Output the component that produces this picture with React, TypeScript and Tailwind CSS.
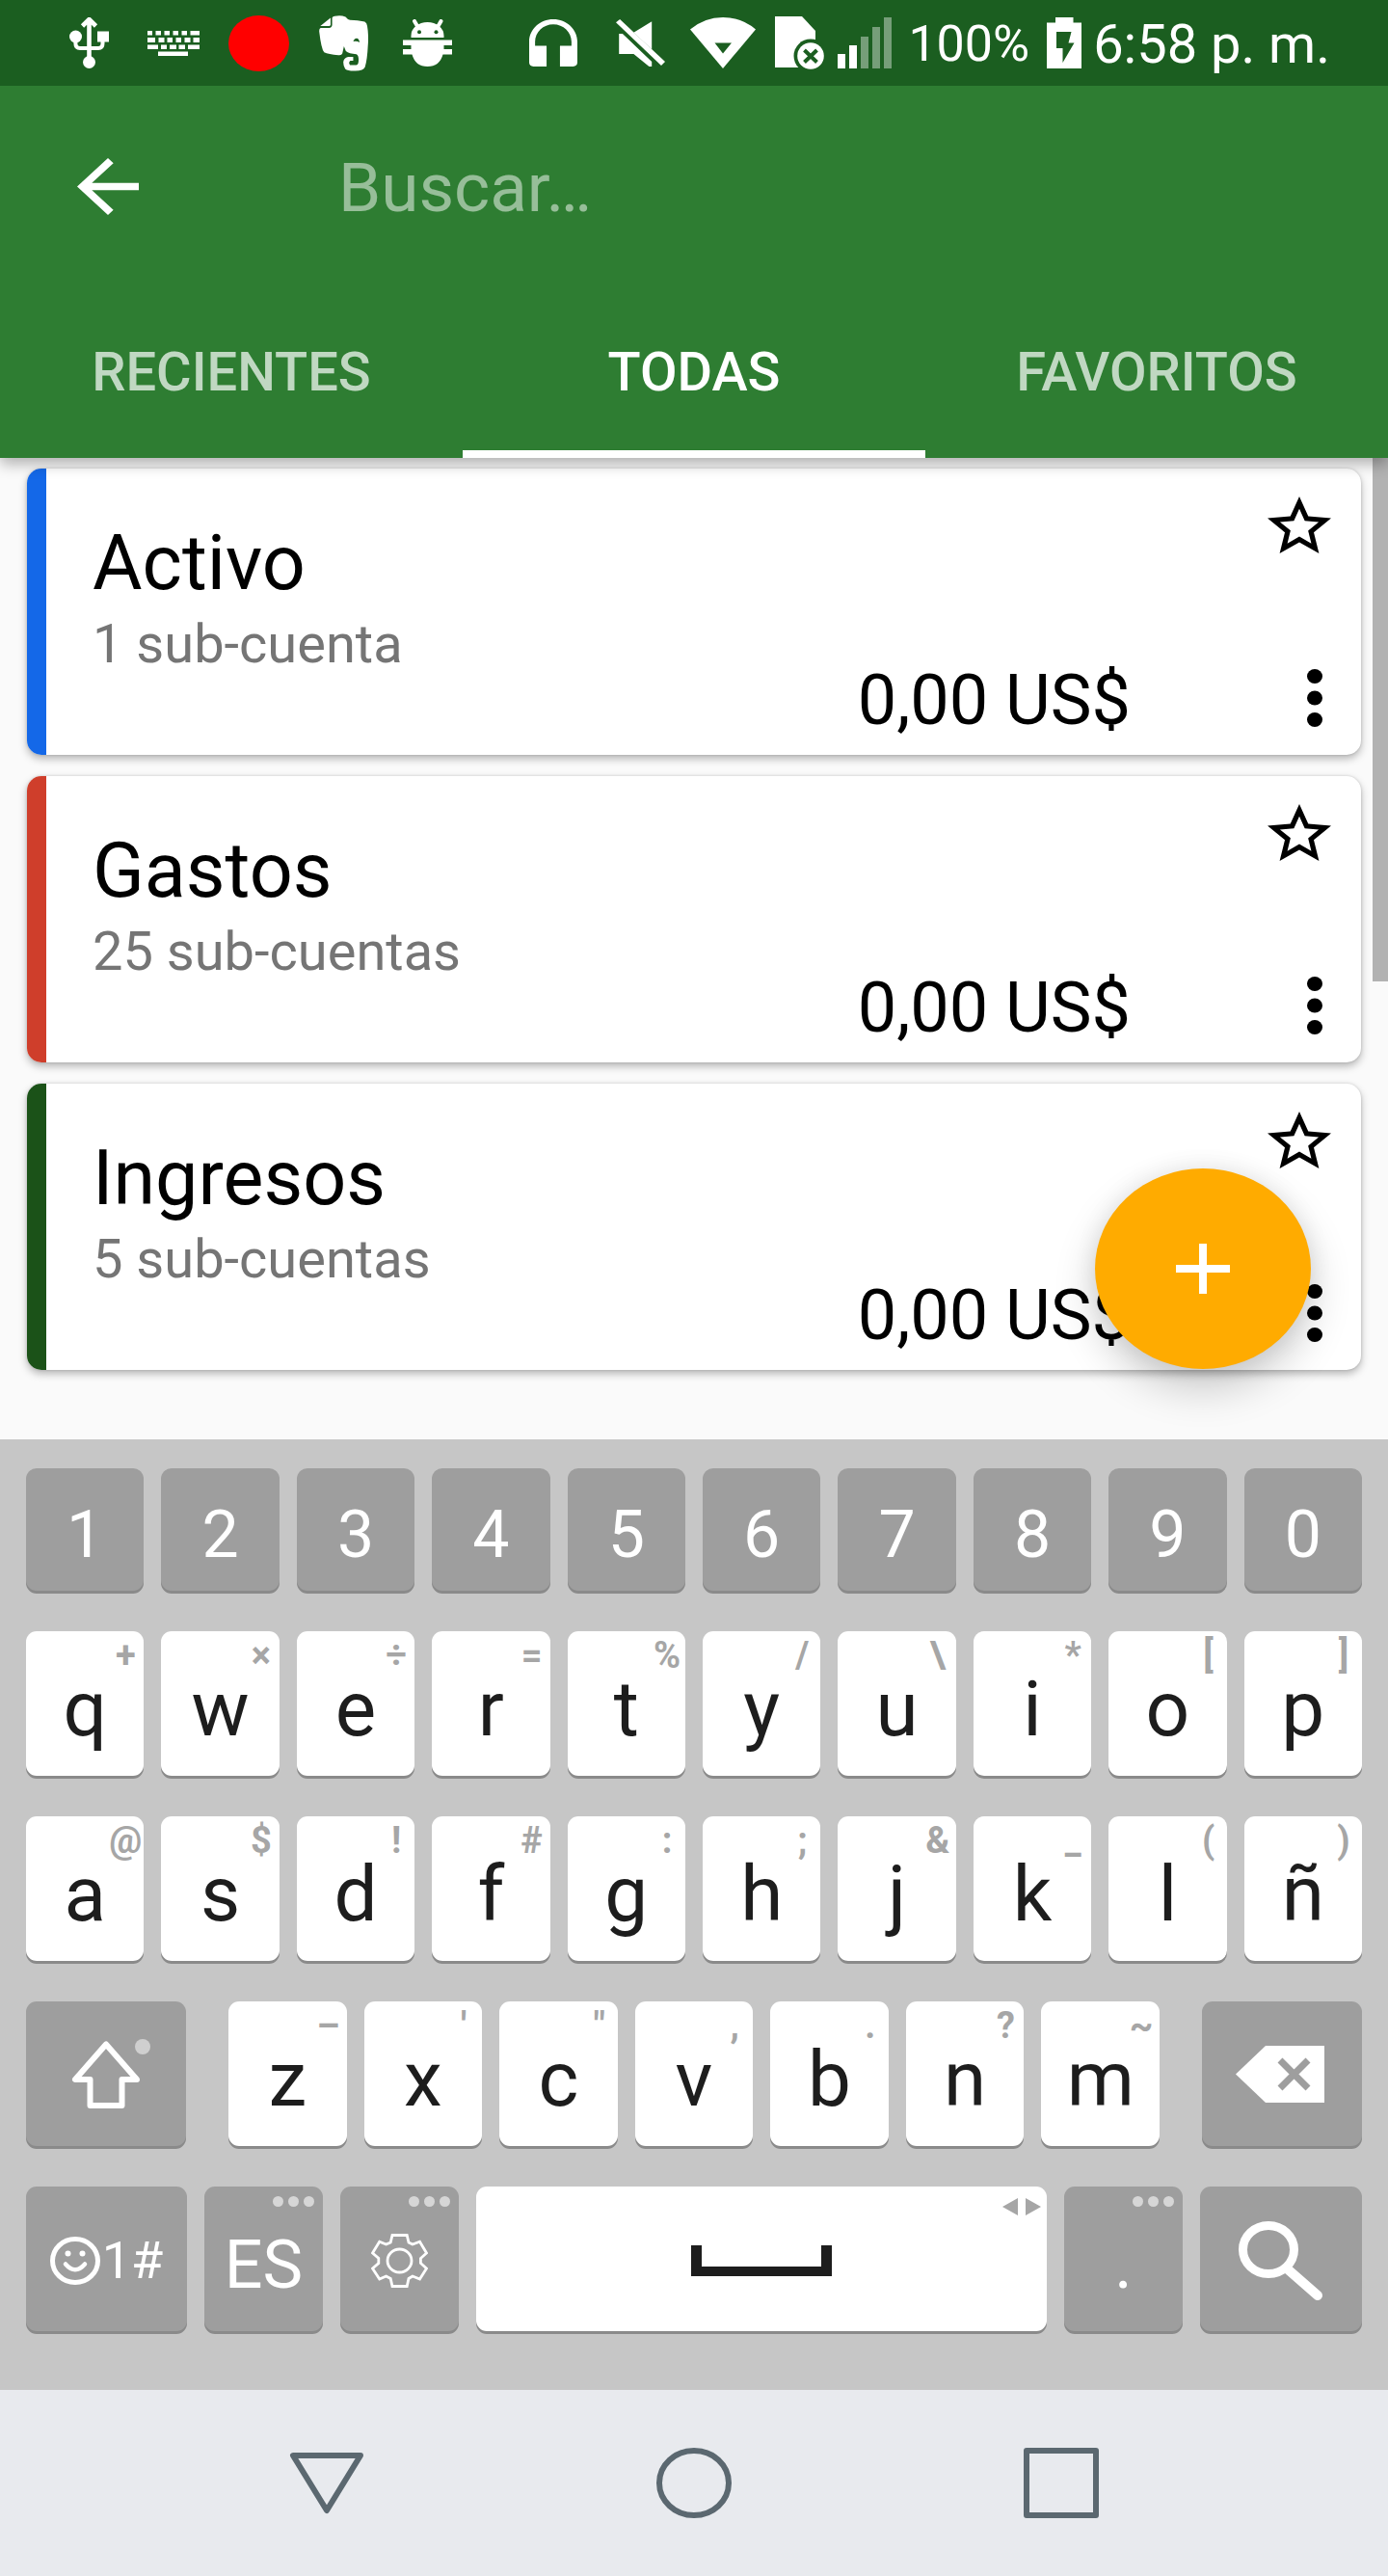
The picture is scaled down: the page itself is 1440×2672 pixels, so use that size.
import React from "react";

type Account = { name: string; detail: string; stripe: string };

const accounts: Account[] = [
  { name: "Activo", detail: "1 sub-cuenta", stripe: "bg-[#1468e8]" },
  { name: "Gastos", detail: "25 sub-cuentas", stripe: "bg-[#cf3e2b]" },
  { name: "Ingresos", detail: "5 sub-cuentas", stripe: "bg-[#1b5218]" },
];

const digits = ["1", "2", "3", "4", "5", "6", "7", "8", "9", "0"];

const topRow = [
  ["q", "+"], ["w", "×"], ["e", "÷"], ["r", "="], ["t", "%"],
  ["y", "/"], ["u", "\\"], ["i", "*"], ["o", "["], ["p", "]"],
];
const homeRow = [
  ["a", "@"], ["s", "$"], ["d", "!"], ["f", "#"], ["g", ":"],
  ["h", ";"], ["j", "&"], ["k", "_"], ["l", "("], ["ñ", ")"],
];
const bottomRow = [
  ["z", "–"], ["x", "'"], ["c", '"'], ["v", ","], ["b", "."], ["n", "?"], ["m", "~"],
];

function UsbIcon() {
  return (
    <svg width="41" height="53" viewBox="0 0 41 53" fill="#fff" aria-hidden="true">
      <path d="M20.5 2V44M13.5 9L20.5 2L27.5 9" fill="none" stroke="#fff" strokeWidth="4.6" />
      <path d="M6.4 20V27Q6.4 32 11 32H30Q34.5 32 34.5 27V22" fill="none" stroke="#fff" strokeWidth="4" />
      <circle cx="6.5" cy="20" r="6.5" />
      <rect x="29" y="14.5" width="12" height="11" />
      <circle cx="20.5" cy="46.5" r="6.5" />
    </svg>
  );
}

function KeyboardIcon() {
  return (
    <svg width="54" height="26" viewBox="0 0 54 26" fill="#fff" aria-hidden="true">
      <path d="M0 0H5V4.5H0ZM8.5 0H14V4.5H8.5ZM17.5 0H23V4.5H17.5ZM26.5 0H32V4.5H26.5ZM35.5 0H41V4.5H35.5ZM44.5 0H54V4.5H44.5Z" />
      <path d="M0 7H8V12H0ZM11.5 7H17.5V12H11.5ZM20.5 7H26V12H20.5ZM29.5 7H35V12H29.5ZM38.5 7H44.5V12H38.5ZM47.5 7H54V12H47.5Z" />
      <path d="M0 14.5H11V19H0ZM14 14.5H20V19H14ZM23 14.5H30V19H23ZM32.5 14.5H39V19H32.5ZM42 14.5H54V19H42Z" />
      <path d="M11 21.5H42V26H11Z" />
    </svg>
  );
}

function ElephantIcon() {
  return (
    <svg width="51" height="58" viewBox="31 47 154 174" fill="#fff" aria-hidden="true">
      <path d="M72 54Q74 50 80 49Q98 44 114 51Q121 60 128 61Q152 61 174 66Q181 69 182 80Q187 110 184 142Q182 185 175 208Q170 220 145 220Q122 221 113 214Q107 206 107 193Q108 179 122 176H138V188H129Q122 194 128 202H148Q155 200 155 185Q155 172 148 168Q125 166 115 158L109 143L104 166Q102 172 92 171Q60 168 47 162Q38 152 32 100Q30 88 36 86H62Q72 85 72 76Z" />
      <path d="M35 80L67 54V75Q67 80 62 80Z" />
      <path d="M138 128Q142 117 150 118Q157 120 158 131Q150 126 138 128Z" fill="#1b5e20" />
    </svg>
  );
}

function BugIcon() {
  return (
    <svg width="51" height="49" viewBox="0 0 51 49" fill="#fff" aria-hidden="true">
      <path d="M12 2L15.5 8M39.5 2L36 8" stroke="#fff" strokeWidth="4" strokeLinecap="round" />
      <path d="M8.5 19V17A17 14 0 0 1 42.5 17V19Z" />
      <path d="M0 21.5H51V27H42.5V31H51V36.5H41.5Q38 49 25.5 49T9.5 36.5H0V31H8.5V27H0Z" />
      <circle cx="17" cy="13.3" r="2" fill="#1b5e20" />
      <circle cx="34.5" cy="13.3" r="2" fill="#1b5e20" />
    </svg>
  );
}

function HeadsetIcon() {
  return (
    <svg width="50" height="49" viewBox="3 1 18 19" preserveAspectRatio="none" fill="#fff" aria-hidden="true">
      <path d="M12 1c-4.97 0-9 4.03-9 9v8.4c0 1 .6 1.6 1.6 1.6H9.5v-8.3H5.2V10c0-3.87 3.05-7 6.8-7s6.8 3.13 6.8 7v1.7h-4.3V20h4.9c1 0 1.6-.6 1.6-1.6V10c0-4.97-4.03-9-9-9z" />
    </svg>
  );
}

function MuteIcon() {
  return (
    <svg width="51" height="49" viewBox="0 0 51 49" fill="#fff" aria-hidden="true">
      <path d="M37.2 2.3V31.3L18.4 13.7Z" />
      <path d="M3.2 15H6.9L37.2 44V49H34.4L18.4 36H3.2Z" />
      <path d="M0 3.3L4.1 0L51 44L47 48Z" />
    </svg>
  );
}

function WifiIcon() {
  return (
    <svg width="68" height="53" viewBox="0 0 68 53" aria-hidden="true">
      <path d="M0 12.5Q15 0 34 0T68 12.5L34 53Z" fill="#fff" />
      <path d="M25.5 26.5H43L34 37.5Z" fill="#1b5e20" />
    </svg>
  );
}

function SimIcon() {
  return (
    <svg width="51" height="55" viewBox="0 0 51 55" aria-hidden="true">
      <path d="M0 0H28L42 15V53H0Z" fill="#fff" />
      <circle cx="37" cy="41" r="17.5" fill="#1b5e20" />
      <circle cx="37" cy="41" r="13.8" fill="#fff" />
      <path d="M30.5 35L43.5 47.5M43.5 35L30.5 47.5" stroke="#1b5e20" strokeWidth="4" />
    </svg>
  );
}

function SignalIcon() {
  return (
    <svg width="56" height="53" viewBox="0 0 56 53" fill="#fff" aria-hidden="true">
      <path d="M0 38H8V53H0ZM12 29H20V53H12Z" />
      <path d="M24 20H32V53H24ZM36 10H44V53H36ZM48 0H56V53H48Z" opacity="0.4" />
    </svg>
  );
}

function BatteryIcon() {
  return (
    <svg width="36" height="53" viewBox="0 0 36 53" aria-hidden="true">
      <path d="M9 0H27.5V5.5H36V53H0V5.5H9Z" fill="#fff" />
      <path d="M10 15H25.5L22.5 26.5H28.5L16.5 47V32H10Z" fill="#1b5e20" />
    </svg>
  );
}

function StatusBar() {
  return (
    <div className="flex h-[89px] items-center justify-between bg-[#1b5e20] pr-[60px] pl-[72px] text-white">
      <div className="flex items-center">
        <UsbIcon />
        <span className="ml-10"><KeyboardIcon /></span>
        <span className="ml-[30px] h-[58px] w-[63px] rounded-[50%] bg-[#ff0000]" />
        <span className="ml-[31px]"><ElephantIcon /></span>
        <span className="ml-9"><BugIcon /></span>
      </div>
      <div className="flex items-center">
        <HeadsetIcon />
        <span className="ml-10"><MuteIcon /></span>
        <span className="ml-[26px]"><WifiIcon /></span>
        <span className="ml-5"><SimIcon /></span>
        <span className="ml-[14px]"><SignalIcon /></span>
        <span className="ml-[17px] pt-[2px] text-[52px] leading-[60px]">100%</span>
        <span className="ml-[18px]"><BatteryIcon /></span>
        <time className="ml-3 pt-[2px] text-[56px] leading-[60px]">6:58 p. m.</time>
      </div>
    </div>
  );
}

function Header() {
  return (
    <header className="relative z-10 bg-[#2e7d32] shadow-[0_6px_14px_rgba(0,0,0,0.3)]">
      <StatusBar />
      <div className="flex h-[208px] items-center pr-10 pl-20">
        <button type="button" aria-label="Atrás">
          <svg width="64" height="59" viewBox="4 4 16 16" preserveAspectRatio="none" fill="#fff" aria-hidden="true">
            <path d="M20 11H7.83l5.59-5.59L12 4l-8 8 8 8 1.41-1.41L7.83 13H20v-2z" />
          </svg>
        </button>
        <input
          type="text"
          aria-label="Buscar"
          placeholder="Buscar…"
          className="ml-[207px] min-w-0 flex-1 bg-transparent pt-1 text-[71px] leading-[84px] text-white outline-none placeholder:text-white/50"
        />
      </div>
      <div role="tablist" className="grid h-[178px] grid-cols-3 text-[56px] leading-[64px] font-medium">
        <button type="button" role="tab" aria-selected="false" className="text-white/70">RECIENTES</button>
        <button type="button" role="tab" aria-selected="true" className="border-b-8 border-white pt-2 text-white">TODAS</button>
        <button type="button" role="tab" aria-selected="false" className="text-white/70">FAVORITOS</button>
      </div>
    </header>
  );
}

function AccountCard({ name, detail, stripe }: Account) {
  return (
    <li className="flex overflow-hidden rounded-[15px] bg-white shadow-[0_4px_8px_rgba(0,0,0,0.28),0_0_3px_rgba(0,0,0,0.15)]">
      <span className={`w-5 ${stripe}`} />
      <div className="flex-1 pt-[52px] pb-[82px] pl-12">
        <h2 className="text-[79px] leading-[92px] text-black">{name}</h2>
        <p className="mt-[5px] text-[56px] leading-[66px] text-[#757575]">{detail}</p>
      </div>
      <p className="self-end pb-[14px] text-[72px] leading-[84px] text-black">0,00 US$</p>
      <div className="flex w-[239px] flex-col items-end justify-between py-[29px] pr-[31px]">
        <button type="button" aria-label={`Marcar ${name} como favorita`}>
          <svg width="66" height="59" viewBox="2 2 20 19" preserveAspectRatio="none" aria-hidden="true">
            <path d="M22 9.24l-7.19-.62L12 2 9.19 8.63 2 9.24l5.46 4.73L5.82 21 12 17.27 18.18 21l-1.63-7.03L22 9.24zM12 15.4l-3.76 2.27 1-4.28-3.32-2.88 4.38-.38L12 6.1l1.71 4.04 4.38.38-3.32 2.88 1 4.28L12 15.4z" />
          </svg>
        </button>
        <button type="button" aria-label={`Opciones de ${name}`} className="mr-[9px]">
          <svg width="16" height="60" viewBox="0 0 16 60" aria-hidden="true">
            <ellipse cx="8" cy="7.5" rx="8" ry="7.5" />
            <ellipse cx="8" cy="30" rx="8" ry="7.5" />
            <ellipse cx="8" cy="52.5" rx="8" ry="7.5" />
          </svg>
        </button>
      </div>
    </li>
  );
}

const keyBase = "relative flex items-center justify-center rounded-[11px] shadow-[0_3px_0_#8a8a8a]";

function DigitKey({ label }: { label: string }) {
  return (
    <button type="button" className={`${keyBase} h-[127px] bg-[#9e9e9e] pt-[10px] text-[68px] leading-[80px] text-white`}>
      {label}
    </button>
  );
}

function LetterKey({ label, hint }: { label: string; hint: string }) {
  return (
    <button type="button" className={`${keyBase} h-[150px] bg-white pt-3 text-[80px] leading-[94px] text-[#1d1d1d]`}>
      {label}
      <span className="absolute top-[3px] right-0 flex w-[38px] justify-center text-[38px] leading-[44px] font-bold text-[#a6a6a6]">
        {hint}
      </span>
    </button>
  );
}

function GreyKey({ label, more, children }: { label: string; more?: boolean; children: React.ReactNode }) {
  return (
    <button type="button" aria-label={label} className={`${keyBase} h-[150px] bg-[#9e9e9e] text-white`}>
      {children}
      {more && (
        <span className="absolute top-[10px] right-[9px] flex gap-[5px]">
          <span className="size-[11px] rounded-full bg-[#d6d6d6]" />
          <span className="size-[11px] rounded-full bg-[#d6d6d6]" />
          <span className="size-[11px] rounded-full bg-[#d6d6d6]" />
        </span>
      )}
    </button>
  );
}

function Keyboard() {
  return (
    <section aria-label="Teclado" className="flex flex-col gap-[42px] bg-[#c6c6c6] px-[27px] pt-[30px] pb-[61px]">
      <div className="grid grid-cols-10 gap-[18px]">
        {digits.map((d) => <DigitKey key={d} label={d} />)}
      </div>
      <div className="grid grid-cols-10 gap-[18px]">
        {topRow.map(([k, h]) => <LetterKey key={k} label={k} hint={h} />)}
      </div>
      <div className="grid grid-cols-10 gap-[18px]">
        {homeRow.map(([k, h]) => <LetterKey key={k} label={k} hint={h} />)}
      </div>
      <div className="grid grid-cols-[166fr_966fr_166fr] gap-[44px]">
        <GreyKey label="Mayúsculas">
          <svg width="92" height="72" viewBox="0 0 92 72" aria-hidden="true">
            <path d="M46 5.5L14 42H29.5V69H62.5V42H78Z" fill="none" stroke="#fff" strokeWidth="6" strokeLinejoin="round" />
            <circle cx="84" cy="8" r="8" fill="#cfcfcf" />
          </svg>
        </GreyKey>
        <div className="grid grid-cols-7 gap-[18px]">
          {bottomRow.map(([k, h]) => <LetterKey key={k} label={k} hint={h} />)}
        </div>
        <GreyKey label="Borrar">
          <svg width="92" height="59" viewBox="0 0 92 59" aria-hidden="true" className="mr-1">
            <path d="M0 29.5L31 0H92V59H31Z" fill="#fff" />
            <path d="M46 15L75 44M75 15L46 44" stroke="#9e9e9e" strokeWidth="7" />
          </svg>
        </GreyKey>
      </div>
      <div className="grid grid-cols-[167fr_123fr_123fr_592fr_123fr_168fr] gap-[18px]">
        <GreyKey label="Emojis, números y símbolos">
          <svg width="52" height="50" viewBox="0 0 52 50" fill="none" stroke="#fff" aria-hidden="true" className="mt-1">
            <ellipse cx="26" cy="25" rx="23.5" ry="22.5" strokeWidth="5" />
            <path d="M16 28.5Q26 40 36 28.5" strokeWidth="4.5" strokeLinecap="round" />
            <circle cx="18.5" cy="17.5" r="3" fill="#fff" stroke="none" />
            <circle cx="33.5" cy="17.5" r="3" fill="#fff" stroke="none" />
          </svg>
          <span className="pt-1 pl-[2px] text-[54px] leading-[64px]">1#</span>
        </GreyKey>
        <GreyKey label="Idioma: español" more>
          <span className="pt-3 text-[70px] leading-[80px]">ES</span>
        </GreyKey>
        <GreyKey label="Ajustes" more>
          <svg width="59" height="56" viewBox="0 0 59 56" fill="none" stroke="#fff" strokeWidth="2.8" aria-hidden="true" className="mt-1">
            <path d="M22 1.5H37.2L39 9L43 11L50.5 8.3L57.5 20L51.4 25.5V30.5L57.5 36L50.5 47L43 44L39 46.5L37.2 54.5H22L20.2 46.5L15.6 44L8.7 47L1.5 36L7.8 30.5V25.5L1.5 20L8.7 8.3L15.6 11L20.2 9Z" />
            <ellipse cx="29.5" cy="28" rx="12.5" ry="12" />
          </svg>
        </GreyKey>
        <button type="button" aria-label="Espacio" className={`${keyBase} h-[150px] bg-white`}>
          <span className="mt-1 h-[32px] w-[146px] border-x-[11px] border-b-[10px] border-[#1d1d1d]" />
          <svg width="40" height="18" viewBox="0 0 40 18" fill="#a6a6a6" aria-hidden="true" className="absolute top-[12px] right-[6px]">
            <path d="M0 9L16 0V18ZM24 0L40 9L24 18Z" />
          </svg>
        </button>
        <GreyKey label="Punto" more>
          <span className="pt-3 text-[70px] leading-[80px]">.</span>
        </GreyKey>
        <GreyKey label="Buscar">
          <svg width="88" height="82" viewBox="0 0 88 82" fill="none" stroke="#fff" aria-hidden="true" className="mt-1">
            <ellipse cx="31" cy="29.5" rx="26.5" ry="25" strokeWidth="9" />
            <path d="M50 49L82 77" strokeWidth="10" strokeLinecap="round" />
          </svg>
        </GreyKey>
      </div>
    </section>
  );
}

function NavigationBar() {
  return (
    <nav aria-label="Sistema" className="flex h-[193px] items-center justify-between bg-[#e8eaee] px-[300px]">
      <button type="button" aria-label="Atrás">
        <svg width="78" height="73" viewBox="0 0 78 73" fill="none" stroke="#5b6870" strokeWidth="6" strokeLinejoin="round" aria-hidden="true">
          <path d="M4 8H74L39 65Z" />
        </svg>
      </button>
      <button type="button" aria-label="Inicio">
        <svg width="78" height="73" viewBox="0 0 78 73" fill="none" stroke="#5b6870" strokeWidth="6" aria-hidden="true">
          <ellipse cx="39" cy="36.5" rx="36" ry="33.5" />
        </svg>
      </button>
      <button type="button" aria-label="Aplicaciones recientes">
        <svg width="78" height="73" viewBox="0 0 78 73" fill="none" stroke="#5b6870" strokeWidth="6" strokeLinejoin="round" aria-hidden="true">
          <path d="M3 3H75V70H3Z" />
        </svg>
      </button>
    </nav>
  );
}

export default function App() {
  return (
    <div className="flex min-h-screen flex-col bg-[#fafafa] font-[Roboto,sans-serif]">
      <Header />
      <main className="relative flex-1 px-7 pt-[11px] pb-[71px]">
        <ul className="flex flex-col gap-[22px]">
          {accounts.map((account) => <AccountCard key={account.name} {...account} />)}
        </ul>
        <span className="absolute top-0 right-0 h-[543px] w-4 bg-[#b2b2b2]" />
        <button
          type="button"
          aria-label="Nueva cuenta"
          className="absolute right-20 bottom-[73px] flex h-[208px] w-[224px] items-center justify-center rounded-[50%] bg-[#ffab00] shadow-[0_20px_44px_rgba(0,0,0,0.2),0_0_24px_rgba(0,0,0,0.08)]"
        >
          <svg width="56" height="52" viewBox="0 0 56 52" aria-hidden="true">
            <path d="M28 0V52M0 26H56" stroke="#fff" strokeWidth="8" />
          </svg>
        </button>
      </main>
      <Keyboard />
      <NavigationBar />
    </div>
  );
}
